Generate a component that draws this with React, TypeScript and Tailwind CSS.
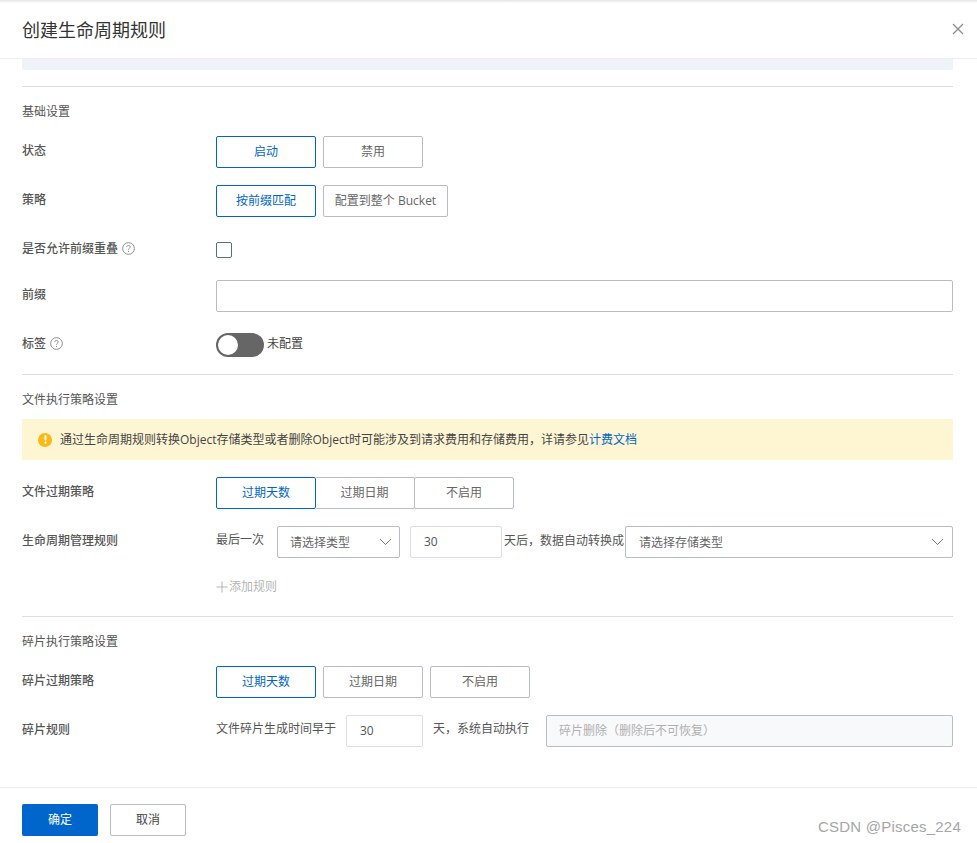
import React from "react";

const font = { fontFamily: '"Open Sans","Noto Sans CJK SC",sans-serif' };

function Btn({ children, active, w = "w-[100px]" }: { children: React.ReactNode; active?: boolean; w?: string }) {
  return (
    <div
      className={`${w} h-8 flex items-center justify-center rounded-[2px] border text-xs ${
        active ? "border-[#0066cc] text-[#0066cc]" : "border-[#b8bcc4] text-[#666666]"
      }`}
    >
      {children}
    </div>
  );
}

function Label({ children, tight }: { children: React.ReactNode; tight?: boolean }) {
  return (
    <div className={`w-[194px] shrink-0 text-xs font-medium text-[#555555] flex items-center gap-1 h-[30px] ${tight ? "-mt-[3px]" : ""}`}>
      {children}
    </div>
  );
}

function Help() {
  return (
    <svg width="13" height="13" viewBox="0 0 12 12" fill="none" stroke="#8a8a8a" strokeWidth="0.9">
      <circle cx="6" cy="6" r="5.4" />
      <path d="M4.4 4.7C4.4 3.8 5.1 3.2 6 3.2s1.6.6 1.6 1.4c0 1.1-1.6 1.2-1.6 2.5" />
      <path d="M6 8.2v1" />
    </svg>
  );
}

function Chevron() {
  return (
    <svg width="13" height="8" viewBox="0 0 13 8" fill="none" stroke="#777777" strokeWidth="1">
      <path d="M1 1l5.5 5.5L12 1" />
    </svg>
  );
}

function Divider() {
  return <div className="h-px bg-[#dcdee2]" />;
}

function Section({ children }: { children: React.ReactNode }) {
  return <div className="text-xs text-[#555555] leading-4">{children}</div>;
}

export default function App() {
  return (
    <div className="relative w-[977px] h-[843px] overflow-hidden bg-white flex flex-col" style={font}>
      <div className="h-[3px] bg-gradient-to-b from-[#e4e4e4] to-white shrink-0" />
      <div className="h-[56px] shrink-0 flex items-center justify-between pl-[22px] pr-[13px] border-b border-[#eeeeee]">
        <div className="text-lg text-[#333333] leading-6 -mt-[2px]">创建生命周期规则</div>
        <svg width="12" height="12" viewBox="0 0 12 12" stroke="#8c8c8c" strokeWidth="1.3" className="-mt-[3px]">
          <path d="M1 1l10 10M11 1L1 11" />
        </svg>
      </div>

      <div className="flex-1 flex flex-col px-[22px] min-h-0 pr-[24px]">
        <div className="h-[11px] bg-[#eff2f6] shrink-0 rounded-b-[2px]" />
        <div className="mt-4"><Divider /></div>

        <div className="mt-[17px]"><Section>基础设置</Section></div>

        <div className="flex mt-[16px] h-8">
          <Label>状态</Label>
          <div className="flex gap-[7px]"><Btn active>启动</Btn><Btn>禁用</Btn></div>
        </div>

        <div className="flex mt-[17px] h-8">
          <Label>策略</Label>
          <div className="flex gap-[7px]"><Btn active>按前缀匹配</Btn><Btn w="w-[125px]">配置到整个 Bucket</Btn></div>
        </div>

        <div className="flex mt-[17px] h-8 items-center">
          <Label tight>是否允许前缀重叠<Help /></Label>
          <div className="w-4 h-4 rounded-[2px] border border-[#5a6a80] bg-white" />
        </div>

        <div className="flex mt-[14px] h-8">
          <Label>前缀</Label>
          <div className="flex-1 rounded-[2px] border border-[#b8bcc4]" />
        </div>

        <div className="flex mt-[21px] h-6 items-center">
          <Label tight>标签<Help /></Label>
          <div className="w-12 h-6 rounded-full bg-[#666666] p-[2px] flex items-center">
            <div className="w-5 h-5 rounded-full bg-white" />
          </div>
          <span className="ml-[3px] -mt-[2px] text-xs text-[#444444]">未配置</span>
        </div>

        <div className="mt-[17px]"><Divider /></div>

        <div className="mt-[17px]"><Section>文件执行策略设置</Section></div>

        <div className="mt-[11px] h-[41px] bg-[#fef5d3] flex items-center pl-4 gap-2 text-xs text-[#444444]">
          <div className="w-[14px] h-[14px] rounded-full bg-[#fdb913] text-white flex items-center justify-center">
            <svg width="3" height="9" viewBox="0 0 3 9" fill="white"><rect x="0.5" y="0" width="2" height="5.5" rx="1" /><circle cx="1.5" cy="7.7" r="1.1" /></svg>
          </div>
          <span>通过生命周期规则转换Object存储类型或者删除Object时可能涉及到请求费用和存储费用，详请参见<span className="text-[#0066cc]">计费文档</span></span>
        </div>

        <div className="flex mt-[17px] h-8">
          <Label>文件过期策略</Label>
          <div className="flex">
            <Btn active>过期天数</Btn>
            <Btn w="w-[100px] -ml-px border-l-0">过期日期</Btn>
            <Btn w="w-[100px] -ml-px">不启用</Btn>
          </div>
        </div>

        <div className="flex mt-[17px] h-8">
          <Label>生命周期管理规则</Label>
          <div className="flex-1 flex items-center text-xs text-[#555555]">
            <span className="w-[61px] shrink-0 -mt-[4px]">最后一次</span>
            <div className="w-[123px] h-8 shrink-0 rounded-[2px] border border-[#b8bcc4] flex items-center justify-between pl-3 pr-[7px] text-[#666666]">
              <span className="mt-[1px]">请选择类型</span><Chevron />
            </div>
            <div className="ml-[10px] w-[92px] h-8 shrink-0 rounded-[2px] border border-[#dcdee2] flex items-center pl-[13px] text-[#555555]">30</div>
            <span className="ml-[2px] w-[121px] shrink-0 -mt-[2px]">天后，数据自动转换成</span>
            <div className="w-[328px] h-8 shrink-0 rounded-[2px] border border-[#b8bcc4] flex items-center justify-between pl-[13px] pr-2 text-[#666666]">
              <span className="mt-[1px]">请选择存储类型</span><Chevron />
            </div>
          </div>
        </div>

        <div className="flex mt-[19px] h-[20px] items-center pl-[194px] text-xs text-[#b5b5b5]">
          <svg width="12" height="12" viewBox="0 0 12 12" stroke="#b5b5b5" strokeWidth="1" className="mr-[1px]"><path d="M6 .5v11M.5 6h11" /></svg>
          添加规则
        </div>

        <div className="mt-[19px]"><Divider /></div>

        <div className="mt-[17px]"><Section>碎片执行策略设置</Section></div>

        <div className="flex mt-[16px] h-8">
          <Label>碎片过期策略</Label>
          <div className="flex gap-[7px]"><Btn active>过期天数</Btn><Btn>过期日期</Btn><Btn>不启用</Btn></div>
        </div>

        <div className="flex mt-[17px] h-8">
          <Label>碎片规则</Label>
          <div className="flex-1 flex items-center text-xs text-[#555555]">
            <span className="w-[130px] shrink-0 -mt-[4px]">文件碎片生成时间早于</span>
            <div className="w-[77px] h-8 shrink-0 rounded-[2px] border border-[#dcdee2] flex items-center pl-[13px]">30</div>
            <span className="ml-[10px] w-[113px] shrink-0 -mt-[4px]">天，系统自动执行</span>
            <div className="flex-1 h-8 rounded-[2px] border border-[#b8bcc4] bg-[#f8f9fb] flex items-center pl-3 text-[#b0b0b0]">碎片删除（删除后不可恢复）</div>
          </div>
        </div>
      </div>

      <div className="h-[56px] shrink-0 border-t border-[#ebebeb] flex items-start gap-3 pl-[22px] pt-4">
        <div className="w-[76px] h-8 rounded-[2px] bg-[#0066cc] text-white text-xs flex items-center justify-center">确定</div>
        <div className="w-[76px] h-8 rounded-[2px] border border-[#b8bcc4] text-[#444444] text-xs flex items-center justify-center">取消</div>
      </div>

      <div className="absolute left-[818px] top-[818px] text-[15px] leading-[18px] tracking-[0.22px] text-[#a6a6a6]" style={{ fontFamily: '"Liberation Sans",sans-serif' }}>CSDN @Pisces_224</div>
    </div>
  );
}
